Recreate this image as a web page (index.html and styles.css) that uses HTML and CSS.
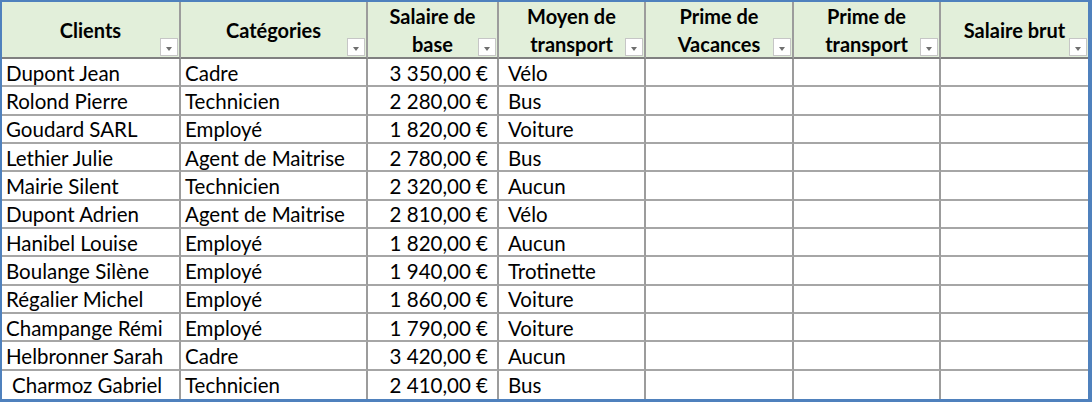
FILE: index.html
```html
<!DOCTYPE html>
<html lang="fr">
<head>
<meta charset="utf-8">
<title>Salaires</title>
<link rel="stylesheet" href="styles.css">
</head>
<body>
<div class="sheet">
  <div class="hd"><span>Clients</span><i class="dd"></i></div>
  <div class="hd"><span>Catégories</span><i class="dd"></i></div>
  <div class="hd"><span>Salaire de<br>base</span><i class="dd"></i></div>
  <div class="hd"><span>Moyen de<br>transport</span><i class="dd"></i></div>
  <div class="hd"><span>Prime de<br>Vacances</span><i class="dd"></i></div>
  <div class="hd"><span>Prime de<br>transport</span><i class="dd"></i></div>
  <div class="hd last"><span>Salaire brut</span><i class="dd"></i></div>

  <div class="c">Dupont Jean</div><div class="c">Cadre</div><div class="c num">3&nbsp;350,00&nbsp;€</div><div class="c tx">Vélo</div><div class="c"></div><div class="c"></div><div class="c last"></div>
  <div class="c">Rolond Pierre</div><div class="c">Technicien</div><div class="c num">2&nbsp;280,00&nbsp;€</div><div class="c tx">Bus</div><div class="c"></div><div class="c"></div><div class="c last"></div>
  <div class="c">Goudard SARL</div><div class="c">Employé</div><div class="c num">1&nbsp;820,00&nbsp;€</div><div class="c tx">Voiture</div><div class="c"></div><div class="c"></div><div class="c last"></div>
  <div class="c">Lethier Julie</div><div class="c">Agent de Maitrise</div><div class="c num">2&nbsp;780,00&nbsp;€</div><div class="c tx">Bus</div><div class="c"></div><div class="c"></div><div class="c last"></div>
  <div class="c">Mairie Silent</div><div class="c">Technicien</div><div class="c num">2&nbsp;320,00&nbsp;€</div><div class="c tx">Aucun</div><div class="c"></div><div class="c"></div><div class="c last"></div>
  <div class="c">Dupont Adrien</div><div class="c">Agent de Maitrise</div><div class="c num">2&nbsp;810,00&nbsp;€</div><div class="c tx">Vélo</div><div class="c"></div><div class="c"></div><div class="c last"></div>
  <div class="c">Hanibel Louise</div><div class="c">Employé</div><div class="c num">1&nbsp;820,00&nbsp;€</div><div class="c tx">Aucun</div><div class="c"></div><div class="c"></div><div class="c last"></div>
  <div class="c">Boulange Silène</div><div class="c">Employé</div><div class="c num">1&nbsp;940,00&nbsp;€</div><div class="c tx">Trotinette</div><div class="c"></div><div class="c"></div><div class="c last"></div>
  <div class="c">Régalier Michel</div><div class="c">Employé</div><div class="c num">1&nbsp;860,00&nbsp;€</div><div class="c tx">Voiture</div><div class="c"></div><div class="c"></div><div class="c last"></div>
  <div class="c">Champange Rémi</div><div class="c">Employé</div><div class="c num">1&nbsp;790,00&nbsp;€</div><div class="c tx">Voiture</div><div class="c"></div><div class="c"></div><div class="c last"></div>
  <div class="c">Helbronner Sarah</div><div class="c">Cadre</div><div class="c num">3&nbsp;420,00&nbsp;€</div><div class="c tx">Aucun</div><div class="c"></div><div class="c"></div><div class="c last"></div>
  <div class="c bot indent">Charmoz Gabriel</div><div class="c bot">Technicien</div><div class="c bot num">2&nbsp;410,00&nbsp;€</div><div class="c bot tx">Bus</div><div class="c bot"></div><div class="c bot"></div><div class="c bot last"></div>
</div>
</body>
</html>
```

FILE: styles.css
```css
html, body {
  margin: 0;
  padding: 0;
  background: #ffffff;
}

.sheet {
  width: 1092px;
  height: 402px;
  box-sizing: border-box;
  border: 2px solid #4f81bd;
  border-right-width: 4px;
  border-bottom-width: 3px;
  display: grid;
  grid-template-columns: 179px 187px 131px 147px 148px 147px 1fr;
  grid-template-rows: 57px repeat(12, 1fr);
  font-family: Lato, "Open Sans", sans-serif;
  font-size: 20.5px;
  color: #000;
}

.hd {
  position: relative;
  background: #e2efda;
  border-right: 2px solid #9c9c9c;
  border-bottom: 2px solid #808080;
  display: flex;
  align-items: center;
  justify-content: center;
  text-align: center;
  font-weight: bold;
  font-size: 20px;
  line-height: 28px;
}

.hd span {
  display: block;
}

.dd {
  position: absolute;
  right: 1px;
  bottom: 1px;
  width: 16px;
  height: 16px;
  background: #ffffff;
  border: 1px solid #c6c6c6;
}

.dd::after {
  content: "";
  position: absolute;
  left: 5px;
  top: 8px;
  border-left: 3px solid transparent;
  border-right: 3px solid transparent;
  border-top: 4px solid #6f6f6f;
}

.c {
  border-right: 2px solid #9c9c9c;
  border-bottom: 2px solid #a6a6a6;
  display: flex;
  align-items: center;
  padding: 1px 4px 0;
  white-space: nowrap;
  overflow: hidden;
}

.num {
  justify-content: flex-end;
  padding-right: 9px;
}

.tx {
  padding-left: 9px;
}

.indent {
  padding-left: 10px;
}

.last {
  border-right: none;
}

.bot {
  border-bottom: none;
}
```
